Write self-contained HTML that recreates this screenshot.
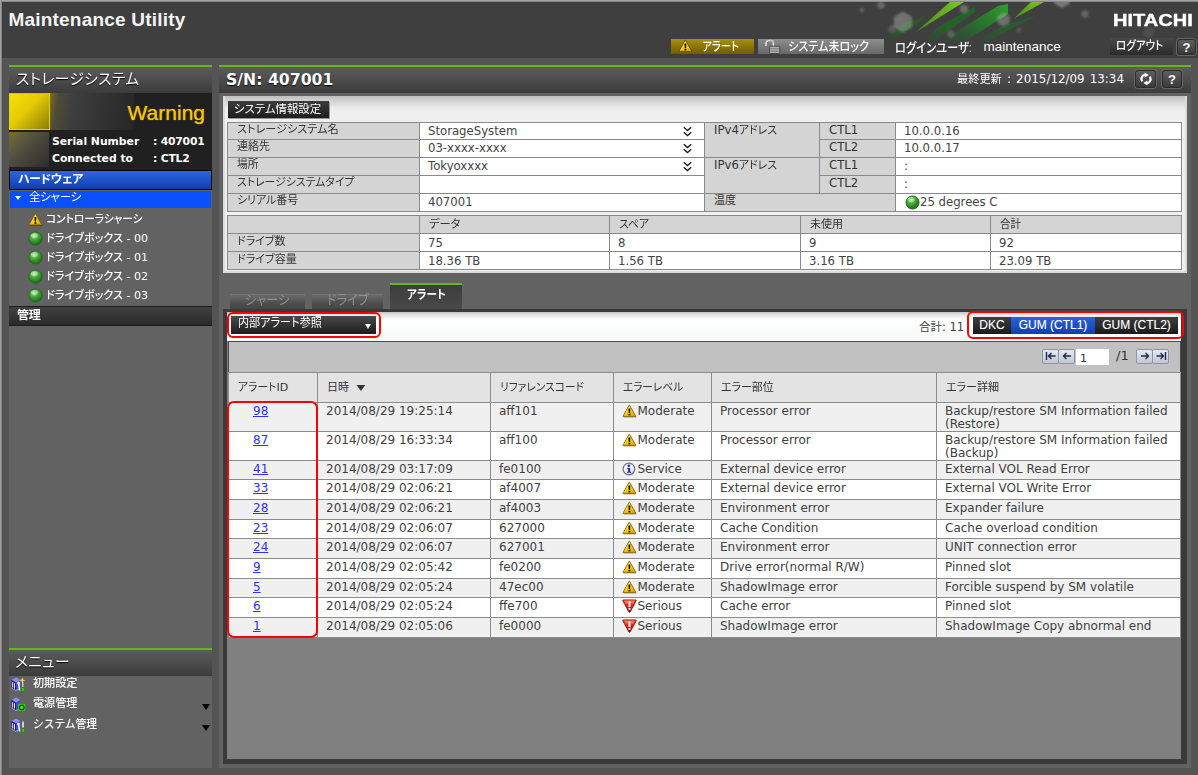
<!DOCTYPE html>
<html lang="ja"><head><meta charset="utf-8"><title>Maintenance Utility</title>
<style>
*{box-sizing:border-box;margin:0;padding:0}
html,body{width:1198px;height:775px;overflow:hidden}
body{position:relative;background:#545454;font-family:"DejaVu Sans","Liberation Sans","Noto Sans CJK JP",sans-serif;font-size:11.7px;color:#3c3c3c}
.abs{position:absolute}
.jp{font-family:"Liberation Sans","Noto Sans CJK JP",sans-serif}
#frameT{left:0;top:0;width:1198px;height:2px;background:linear-gradient(#b2b2b2,#7a7a7a)}
#frameL{left:0;top:0;width:2px;height:775px;background:linear-gradient(to right,#b2b2b2,#727272)}
#topbar{left:2px;top:2px;width:1196px;height:56px;background:#3f3f3f}
#title{left:8.5px;top:9px;font:bold 19px "Liberation Sans",sans-serif;color:#f4f4f4;letter-spacing:.2px;white-space:nowrap}
/* left panel */
#lp{left:9px;top:65px;width:203px;height:703px;background:#626262}
.gl{left:0;top:0;width:100%;height:2px;background:#5fb81c}
.phead{left:0;top:2px;width:100%;height:26px;background:linear-gradient(#5c5c5c,#3b3b3b);color:#fff}

.phead>span{position:absolute;left:7px;top:0px;font:15px "Liberation Sans","Noto Sans CJK JP",sans-serif;font-feature-settings:"palt";letter-spacing:.4px;color:#fff;white-space:nowrap;text-shadow:0 1px 1px #000}
#status{left:0;top:28px;width:100%;height:77px;background:#202020}
#sq1{left:0;top:0;width:41px;height:37px;background:linear-gradient(135deg,#f6e20a 0%,#e2cb06 45%,#8f7c05 100%);border:1px solid #e6cf06;border-top-color:#d8c208;border-left-color:#e8d408}
#sq2{left:0;top:39px;width:40px;height:35px;background:linear-gradient(135deg,#787033 0%,#525040 38%,#2c2c2c 100%)}
#sgrad{left:41px;top:0;width:84px;height:37px;background:linear-gradient(100deg,#7b6f1e 0%,#4e4c36 10%,#3e3e3e 28%,#262626 100%)}
#warn{right:7px;top:8px;font:21px "Liberation Sans",sans-serif;color:#f7c600;white-space:nowrap;text-shadow:0 0 1px rgba(247,198,0,.8)}
.sline{left:43px;font:bold 10.8px "DejaVu Sans","Liberation Sans",sans-serif;color:#fff;white-space:nowrap}
.sline b{position:absolute;left:101px;top:0;font-weight:bold;letter-spacing:-.2px}
#hw{left:0;top:105px;width:100%;height:20px;background:linear-gradient(#2d66e0,#0f3fae);border:1px solid #0a0a0a}
.bar>span{position:absolute;left:8px;top:-1.5px;font:bold 11.5px "Liberation Sans","Noto Sans CJK JP",sans-serif;font-feature-settings:"palt";letter-spacing:-.3px;color:#fff;white-space:nowrap}
#all{left:1px;top:126px;width:201px;height:17px;background:#0a50ff}
#all>span{position:absolute;left:19px;top:-3px;font:11.5px "Liberation Sans","Noto Sans CJK JP",sans-serif;font-feature-settings:"palt";letter-spacing:-.3px;color:#fff;white-space:nowrap}
#all i{position:absolute;left:5px;top:5px;border:3.5px solid transparent;border-top:4px solid #fff;border-bottom:0}
.ti{left:19px;height:18px;white-space:nowrap;font:500 11px "DejaVu Sans","Noto Sans CJK JP",sans-serif;font-feature-settings:"palt";color:#fff}
.ti>span{position:absolute;left:18px;top:-1px}
.ti svg{position:absolute;left:0;top:1px}
#mg{left:0;top:241px;width:100%;height:20px;background:linear-gradient(#404040,#2a2a2a);border:1px solid #1c1c1c;border-left:0;border-right:0}
#menu{left:0;top:583px;width:100%;height:119px}
#menu .phead>span{left:6px}
.mi{left:0;width:100%;height:18px;font:500 11.5px "Liberation Sans","Noto Sans CJK JP",sans-serif;color:#fff;white-space:nowrap}
.mi>span{position:absolute;left:24px;top:0}
.mi i{position:absolute;right:2.5px;top:10px;border:4px solid transparent;border-top:6px solid #000;border-bottom:0}
.mi svg{position:absolute;left:2px;top:3px}

/* top bar */
.tb{top:39px;height:15px;color:#fff;font:500 12px "Liberation Sans","Noto Sans CJK JP",sans-serif;font-feature-settings:"palt";white-space:nowrap}
.tb>span{position:absolute;top:-2px}
#b_alert{left:671px;width:83px;background:linear-gradient(#a8900f,#8c7608 50%,#6f5c02)}
#b_lock{left:758px;width:126px;background:linear-gradient(#8d8d8d,#7a7a7a 50%,#686868)}
#login{left:895px;top:37px;color:#fff;font:500 13px "Liberation Sans","Noto Sans CJK JP",sans-serif;font-feature-settings:"palt";white-space:nowrap}
#user{left:983.5px;top:39px;color:#fff;font:13.5px "Liberation Sans",sans-serif;white-space:nowrap}
#hitachi{left:1112.5px;top:10.5px;color:#fff;-webkit-text-stroke:.4px #fff;font:bold 16.5px "Liberation Sans",sans-serif;white-space:nowrap;transform:scaleX(1.215);transform-origin:0 0}
#logout{left:1110px;top:38px;width:63px;height:17px;background:linear-gradient(#484848,#2c2c2c);color:#fff;font:500 12px "Liberation Sans","Noto Sans CJK JP",sans-serif;font-feature-settings:"palt";white-space:nowrap}
#logout>span{position:absolute;left:6px;top:-2px}
.qb{width:19px;height:17px;border:1px solid #2c2c2c;border-radius:3px;box-shadow:0 0 0 1px #666;background:linear-gradient(#5e5e5e,#3a3a3a);color:#fff;font:bold 13px "Liberation Sans",sans-serif;text-align:center;line-height:16px}
/* right panel */
#rp{left:219px;top:65px;width:972px;height:703px;background:#626262}
#rp .phead span.sn{left:7px;top:2.5px;font:bold 15.7px "DejaVu Sans","Liberation Sans",sans-serif;letter-spacing:0}
#upd{right:67px;top:1.5px;color:#fff;word-spacing:1.3px;font:11.9px "DejaVu Sans","Noto Sans CJK JP",sans-serif;white-space:nowrap}
#info{left:4px;top:31px;width:964px;height:177px;background:linear-gradient(#bebebe,#d6d6d6 6px,#ebebeb 12px,#f0f0f0 17px);border:2px solid #dcdcdc;border-top:0}

#sysbtn{left:3px;top:5px;width:101px;height:17px;background:linear-gradient(#3c3c3c,#1e1e1e);color:#fff;font:11.5px "Liberation Sans","Noto Sans CJK JP",sans-serif;font-feature-settings:"palt";white-space:nowrap;box-shadow:1px 1px 0 #999}
#sysbtn>span{position:absolute;left:6px;top:-1px}
table{border-collapse:collapse;table-layout:fixed;position:absolute}
.it tr{height:18px}
.it td{border:1px solid #8a8a8a;padding:0 0 0 9px;vertical-align:top;line-height:16px;font-size:11.7px;color:#444;white-space:nowrap;overflow:hidden;background:#fff}
.it td.l{background:#d4d4d4;padding-left:9px;font:11px "DejaVu Sans","Noto Sans CJK JP",sans-serif;font-feature-settings:"palt";line-height:14px;color:#333}
.it td.v{padding-top:0;padding-left:8px}
.t2 td.v{padding-top:1px}
.it.t2 td.l{padding-top:2px}
.it td.m{font-size:11.7px;line-height:15px}
.it td.m .sx{font-size:11px}
.chev{position:absolute;right:12px;top:3px}
td{position:relative}

.tab{height:16px;background:linear-gradient(#6a6a6a,#4c4c4c 60%,#454545);color:#8e8e8e;text-align:left;font:13px "Liberation Sans","Noto Sans CJK JP",sans-serif;font-feature-settings:"palt";white-space:nowrap;text-align:center;border-top:1px solid #747474}
.tab>span{position:relative;top:-6px}
#tab3{left:171px;top:218px;width:72px;height:27px;background:linear-gradient(#3c3c3c,#4a4a4a);border-top:2px solid #5fb81c;color:#fff;text-align:left;font:bold 12px "Liberation Sans","Noto Sans CJK JP",sans-serif;font-feature-settings:"palt";text-align:center;white-space:nowrap}
#ac{left:4px;top:244px;width:964px;height:455px;background:#808080;border:solid #3a3a3a;border-width:2px 6px 5px 4px}
#tool{left:0;top:0;width:954px;height:30px;background:linear-gradient(#3a3a3a 0,#3a3a3a 1px,#c4c4c4 1px,#e6e6e6 4px,#fff 9px,#f7f9f9 100%)}
.red{border:2px solid #f00;border-radius:6px}
#dd{left:4px;top:5px;width:145px;height:18px;background:linear-gradient(#4a4a4a,#1c1c1c);color:#fff;font:12px "Liberation Sans","Noto Sans CJK JP",sans-serif;font-feature-settings:"palt";white-space:nowrap}
#dd>span{position:absolute;left:6.5px;top:-3px}
#dd i{position:absolute;right:5px;top:8px;border:3.5px solid transparent;border-top:5px solid #fff;border-bottom:0}
#total{left:692px;top:7px;font:11.5px "DejaVu Sans","Noto Sans CJK JP",sans-serif;color:#444;white-space:nowrap}
#seg{left:746px;top:6px;height:17px;color:#fff;font:12px "Liberation Sans",sans-serif;white-space:nowrap;background:linear-gradient(#3e3e3e,#1a1a1a)}
#seg>span{position:absolute;top:0;height:17px;line-height:17px;text-align:center;text-shadow:0 0 1px rgba(255,255,255,.35)}
#pager{left:1px;top:30px;width:953px;height:32px;background:#c1c1c1;border:1px solid #4a4a4a}
.pb{top:6.5px;width:17px;height:15px;border:1px solid #8d94a8;background:linear-gradient(#e6e8ee,#c3c7d2);border-radius:2px}
.pb svg{position:absolute;left:1.5px;top:1.5px}
#pin{left:847px;top:7px;width:33px;height:16px;background:#fff;font-size:11px;color:#333;padding:3px 0 0 4px}
#pof{left:887px;top:6px;font-size:13px;color:#333}

.at td{border:1px solid #8c8c8c;padding:2px 0 0 8px;vertical-align:top;font-size:12px;line-height:13px;color:#404040;background:#fff;overflow:hidden}
.at tr.o td{background:#f0f0f0}
.at tr.h td{background:#e3e3e3;height:30px;vertical-align:middle;padding:0 0 3px 9px;font:11px "DejaVu Sans","Noto Sans CJK JP",sans-serif;font-feature-settings:"palt";color:#333;white-space:nowrap}
.at td.id{padding-left:24px}
.at a{color:#3030f2;text-decoration:underline}
.at td.lv{padding-left:23.5px;white-space:nowrap}
.at td.lv svg{position:absolute;left:8px;top:1px}

.sx{display:inline-block;transform-origin:0 50%;white-space:nowrap}
</style></head><body><svg width="0" height="0" style="position:absolute"><defs><radialGradient id="ig" cx="40%" cy="30%" r="75%"><stop offset="0" stop-color="#fff"/><stop offset=".7" stop-color="#e8ecf4"/><stop offset="1" stop-color="#b9c2d2"/></radialGradient><linearGradient id="sg" x1="0" y1="0" x2="0" y2="1"><stop offset="0" stop-color="#ff4a30"/><stop offset=".6" stop-color="#d81c0e"/><stop offset="1" stop-color="#7e0a04"/></linearGradient><linearGradient id="wg" x1="0" y1="0" x2=".6" y2="1"><stop offset="0" stop-color="#fff27a"/><stop offset=".5" stop-color="#ffd92a"/><stop offset="1" stop-color="#e9a800"/></linearGradient></defs></svg>
<div class="abs" id="topbar"></div>
<div class="abs" id="frameT"></div><div class="abs" id="frameL"></div>
<div class="abs" id="title">Maintenance Utility</div>
<svg class="abs" id="deco" width="348" height="55" viewBox="850 2 348 55" style="left:850px;top:2px"><defs><linearGradient id="lg1" x1="0" y1="1" x2="1" y2="0"><stop offset="0" stop-color="#3d8a1a"/><stop offset="1" stop-color="#7cc61f"/></linearGradient><linearGradient id="lg2" x1="0" y1="1" x2="1" y2="0"><stop offset="0" stop-color="#1e5a22" stop-opacity="0"/><stop offset=".45" stop-color="#1f6a24" stop-opacity=".9"/><stop offset="1" stop-color="#1c6c24"/></linearGradient><linearGradient id="lg3" x1="0" y1="1" x2="1" y2="0"><stop offset="0" stop-color="#1e5a22" stop-opacity="0"/><stop offset=".5" stop-color="#22792a" stop-opacity=".8"/><stop offset="1" stop-color="#2fa02b"/></linearGradient><filter id="bl"><feGaussianBlur stdDeviation=".9"/></filter></defs><polygon points="927,16.5 906,22 878,43 888,43" fill="url(#lg2)" opacity=".6"/><polygon points="975,6.5 975,12 934,41 920,43 938,27" fill="url(#lg2)" opacity=".85"/><polygon points="1008,4 998,6 938,43 962,43 1008,14" fill="url(#lg3)"/><polygon points="1035,16 1000,27 972,44 984,44" fill="url(#lg2)" opacity=".7"/><polygon points="916,32 950,2 964,2" fill="url(#lg1)"/><polygon points="1014,18.5 1031,2 1044,2" fill="url(#lg1)"/><g filter="url(#bl)" fill="#fff"><polygon points="903.0,11.5 912.1,16.8 912.1,27.2 903.0,32.5 893.9,27.3 893.9,16.8" opacity="0.26"/><polygon points="881.0,1.0 884.5,3.0 884.5,7.0 881.0,9.0 877.5,7.0 877.5,3.0" opacity="0.22"/><polygon points="862.0,7.5 864.2,8.8 864.2,11.2 862.0,12.5 859.8,11.3 859.8,8.8" opacity="0.18"/><polygon points="892.0,24.8 895.6,26.9 895.6,31.1 892.0,33.2 888.4,31.1 888.4,26.9" opacity="0.14"/><polygon points="964.0,4.4 968.0,6.7 968.0,11.3 964.0,13.6 960.0,11.3 960.0,6.7" opacity="0.24"/><polygon points="1003.5,12.5 1009.6,16.0 1009.6,23.0 1003.5,26.5 997.4,23.0 997.4,16.0" opacity="0.24"/><polygon points="1062.0,-10.0 1069.8,-5.5 1069.8,3.5 1062.0,8.0 1054.2,3.5 1054.2,-5.5" opacity="0.3"/><polygon points="1085.0,10.0 1088.5,12.0 1088.5,16.0 1085.0,18.0 1081.5,16.0 1081.5,12.0" opacity="0.2"/><polygon points="951.0,29.8 954.6,31.9 954.6,36.1 951.0,38.2 947.4,36.1 947.4,31.9" opacity="0.16"/><polygon points="1019.0,27.4 1021.3,28.7 1021.3,31.3 1019.0,32.6 1016.7,31.3 1016.7,28.7" opacity="0.14"/><polygon points="1149.0,26.0 1154.2,29.0 1154.2,35.0 1149.0,38.0 1143.8,35.0 1143.8,29.0" opacity="0.08"/></g></svg>
<div class="abs tb" id="b_alert"><svg style="position:absolute;left:7px;top:0" width="15" height="14" viewBox="0 0 15 14"><path d="M7.3 .9 L13.9 12.4 H.9 Z" fill="url(#wg)" stroke="#5f4a08" stroke-width=".9" stroke-linejoin="round"/><path d="M6.4 4.4 h2 l-.35 4.6 h-1.3 Z" fill="#111"/><rect x="6.5" y="9.7" width="1.8" height="1.7" fill="#111"/></svg><span style="left:31px"><span class="sx" id="s14" style="transform:scaleX(0.868);margin-right:-5.6px">アラート</span></span></div>
<div class="abs tb" id="b_lock"><svg style="position:absolute;left:7px;top:0" width="16" height="15" viewBox="0 0 16 15"><path d="M1.2 7 V4.2 C1.2 .6 8.6 .6 8.6 4.2 V8" fill="none" stroke="#f2f2f2" stroke-width="1.7"/><path d="M1.2 7 V4.2 C1.2 .6 8.6 .6 8.6 4.2 V8" fill="none" stroke="#555" stroke-width=".5" transform="translate(.9 .3)"/><rect x="4.6" y="7.2" width="10.2" height="7.3" rx=".8" fill="#b9b9b9" stroke="#3d3d3d" stroke-width=".9"/><path d="M5.3 9.4 H14 M5.3 11 H14 M5.3 12.6 H14" stroke="#6e6e6e" stroke-width=".7"/></svg><span style="left:30px"><span class="sx" id="s15" style="transform:scaleX(0.925);margin-right:-6.6px">システム未ロック</span></span></div>
<div class="abs" id="login"><span class="sx" id="s16" style="transform:scaleX(0.867);margin-right:-11.8px">ログインユーザ:</span></div><div class="abs" id="user">maintenance</div>
<div class="abs" id="hitachi">HITACHI</div>
<div class="abs" id="logout"><span><span class="sx" id="s17" style="transform:scaleX(0.879);margin-right:-6.5px">ログアウト</span></span></div>
<div class="abs qb" style="left:1177px;top:38.5px;height:16px;line-height:15px">?</div>
<div class="abs" id="rp"><div class="abs gl"></div><div class="abs phead"><span class="sn">S/N: 407001</span>
<div class="abs" id="upd"><span class="sx" id="s42" style="transform:scaleX(0.942);margin-right:-2.8px">最終更新</span> : 2015/12/09 13:34</div>
<div class="abs qb" style="left:916px;top:2.5px;height:18px;width:21px"><svg style="position:absolute;left:2.5px;top:1.5px" width="14" height="14" viewBox="0 0 13 13"><path d="M3.2 8.6 A3.6 3.6 0 0 1 6.2 2.6" fill="none" stroke="#fff" stroke-width="2"/><path d="M5.2 .4 L9 2.9 L5.2 5.3 Z" fill="#fff"/><path d="M9.8 4.4 A3.6 3.6 0 0 1 6.8 10.4" fill="none" stroke="#fff" stroke-width="2"/><path d="M7.8 12.6 L4 10.1 L7.8 7.7 Z" fill="#fff"/></svg></div><div class="abs qb" style="left:943px;top:2.5px;height:18px;width:20px;line-height:17px">?</div></div>
<div class="abs tab" style="left:11px;top:229px;width:75px"><span><span class="sx" id="s33" style="transform:scaleX(0.944);margin-right:-2.6px">シャーシ</span></span></div>
<div class="abs tab" style="left:93px;top:229px;width:71px"><span><span class="sx" id="s34" style="transform:scaleX(0.937);margin-right:-2.8px">ドライブ</span></span></div>
<div class="abs" id="tab3"><span><span class="sx" id="s35" style="transform:scaleX(0.886);margin-right:-5.0px">アラート</span></span></div>
<div class="abs" id="ac"><div class="abs" id="tool">
<div class="abs" id="dd"><span><span class="sx" id="s36" style="transform:scaleX(0.926);margin-right:-6.7px">内部アラート参照</span></span><i></i></div>
<div class="abs red" style="left:0px;top:1px;width:154px;height:26px"></div>
<div class="abs" id="total">合計: 11</div>
<div class="abs" id="seg" style="width:205px"><span style="left:0;width:38px">DKC</span><span style="left:38px;width:84px;background:linear-gradient(#2a62dc,#0f3fae)">GUM (CTL1)</span><span style="left:122px;width:83px">GUM (CTL2)</span></div>
<div class="abs red" style="left:740px;top:0px;width:217px;height:28px"></div>
</div>
<div class="abs" id="pager"><div class="abs pb" style="left:813px"><svg width="12" height="10" viewBox="0 0 12 10"><path d="M1.5 1 V9 M10.5 5 H3.5 M6.5 2 L3.5 5 L6.5 8" fill="none" stroke="#1a2a55" stroke-width="1.4"/></svg></div><div class="abs pb" style="left:829px"><svg width="12" height="10" viewBox="0 0 12 10"><path d="M10 5 H2.5 M5.5 2 L2.5 5 L5.5 8" fill="none" stroke="#1a2a55" stroke-width="1.4"/></svg></div><div class="abs" id="pin">1</div><div class="abs" id="pof">/1</div><div class="abs pb" style="left:907px"><svg width="12" height="10" viewBox="0 0 12 10"><path d="M2 5 H9.5 M6.5 2 L9.5 5 L6.5 8" fill="none" stroke="#1a2a55" stroke-width="1.4"/></svg></div><div class="abs pb" style="left:923px"><svg width="12" height="10" viewBox="0 0 12 10"><path d="M10.5 1 V9 M1.5 5 H8.5 M5.5 2 L8.5 5 L5.5 8" fill="none" stroke="#1a2a55" stroke-width="1.4"/></svg></div></div>
<table class="at" style="left:1px;top:61px;width:952px"><colgroup><col style="width:89px"><col style="width:173px"><col style="width:123px"><col style="width:98px"><col style="width:225px"><col style="width:244px"></colgroup><tr class="h"><td><span class="sx" id="s37" style="transform:scaleX(0.986);margin-right:-0.6px">アラート</span>ID</td><td>日時<span style="display:inline-block;font-size:10px;margin-left:8px;transform:scale(1.15,.8)">▼</span></td><td><span class="sx" id="s38" style="transform:scaleX(0.973);margin-right:-2.3px">リファレンスコード</span></td><td><span class="sx" id="s39" style="transform:scaleX(0.968);margin-right:-2.0px">エラーレベル</span></td><td><span class="sx" id="s40" style="transform:scaleX(0.998);margin-right:-0.1px">エラー部位</span></td><td><span class="sx" id="s41" style="transform:scaleX(1.005);margin-right:0.3px">エラー詳細</span></td></tr><tr class="o" style="height:29px"><td class="id"><a>98</a></td><td>2014/08/29 19:25:14</td><td>aff101</td><td class="lv"><svg class="wi" width="15" height="14" viewBox="0 0 15 14"><path d="M7.3 .9 L13.9 12.6 H.9 Z" fill="#6b5200" opacity=".55" transform="translate(.5 .8)"/><path d="M7.3 .9 L13.9 12.4 H.9 Z" fill="url(#wg)" stroke="#8a6a10" stroke-width=".9" stroke-linejoin="round"/><path d="M6.4 4.4 h2 l-.35 4.6 h-1.3 Z" fill="#111"/><rect x="6.5" y="9.7" width="1.8" height="1.7" fill="#111"/></svg>Moderate</td><td>Processor error</td><td>Backup/restore SM Information failed (Restore)</td></tr><tr style="height:29px"><td class="id"><a>87</a></td><td>2014/08/29 16:33:34</td><td>aff100</td><td class="lv"><svg class="wi" width="15" height="14" viewBox="0 0 15 14"><path d="M7.3 .9 L13.9 12.6 H.9 Z" fill="#6b5200" opacity=".55" transform="translate(.5 .8)"/><path d="M7.3 .9 L13.9 12.4 H.9 Z" fill="url(#wg)" stroke="#8a6a10" stroke-width=".9" stroke-linejoin="round"/><path d="M6.4 4.4 h2 l-.35 4.6 h-1.3 Z" fill="#111"/><rect x="6.5" y="9.7" width="1.8" height="1.7" fill="#111"/></svg>Moderate</td><td>Processor error</td><td>Backup/restore SM Information failed (Backup)</td></tr><tr class="o" style="height:19px"><td class="id"><a>41</a></td><td>2014/08/29 03:17:09</td><td>fe0100</td><td class="lv"><svg width="14" height="14" viewBox="0 0 15 15"><circle cx="7.8" cy="8" r="6.4" fill="#555" opacity=".5"/><circle cx="7.4" cy="7.4" r="6.2" fill="url(#ig)" stroke="#70757f" stroke-width="1.2"/><path d="M5.7 6.3 h3 v4.2 h1 v1.1 h-4.2 v-1.1 h1.1 v-3.1 h-.9 Z" fill="#1a1fd0"/><circle cx="7.4" cy="3.9" r="1.35" fill="#1a1fd0"/></svg>Service</td><td>External device error</td><td>External VOL Read Error</td></tr><tr style="height:20px"><td class="id"><a>33</a></td><td>2014/08/29 02:06:21</td><td>af4007</td><td class="lv"><svg class="wi" width="15" height="14" viewBox="0 0 15 14"><path d="M7.3 .9 L13.9 12.6 H.9 Z" fill="#6b5200" opacity=".55" transform="translate(.5 .8)"/><path d="M7.3 .9 L13.9 12.4 H.9 Z" fill="url(#wg)" stroke="#8a6a10" stroke-width=".9" stroke-linejoin="round"/><path d="M6.4 4.4 h2 l-.35 4.6 h-1.3 Z" fill="#111"/><rect x="6.5" y="9.7" width="1.8" height="1.7" fill="#111"/></svg>Moderate</td><td>External device error</td><td>External VOL Write Error</td></tr><tr class="o" style="height:20px"><td class="id"><a>28</a></td><td>2014/08/29 02:06:21</td><td>af4003</td><td class="lv"><svg class="wi" width="15" height="14" viewBox="0 0 15 14"><path d="M7.3 .9 L13.9 12.6 H.9 Z" fill="#6b5200" opacity=".55" transform="translate(.5 .8)"/><path d="M7.3 .9 L13.9 12.4 H.9 Z" fill="url(#wg)" stroke="#8a6a10" stroke-width=".9" stroke-linejoin="round"/><path d="M6.4 4.4 h2 l-.35 4.6 h-1.3 Z" fill="#111"/><rect x="6.5" y="9.7" width="1.8" height="1.7" fill="#111"/></svg>Moderate</td><td>Environment error</td><td>Expander failure</td></tr><tr style="height:19px"><td class="id"><a>23</a></td><td>2014/08/29 02:06:07</td><td>627000</td><td class="lv"><svg class="wi" width="15" height="14" viewBox="0 0 15 14"><path d="M7.3 .9 L13.9 12.6 H.9 Z" fill="#6b5200" opacity=".55" transform="translate(.5 .8)"/><path d="M7.3 .9 L13.9 12.4 H.9 Z" fill="url(#wg)" stroke="#8a6a10" stroke-width=".9" stroke-linejoin="round"/><path d="M6.4 4.4 h2 l-.35 4.6 h-1.3 Z" fill="#111"/><rect x="6.5" y="9.7" width="1.8" height="1.7" fill="#111"/></svg>Moderate</td><td>Cache Condition</td><td>Cache overload condition</td></tr><tr class="o" style="height:20px"><td class="id"><a>24</a></td><td>2014/08/29 02:06:07</td><td>627001</td><td class="lv"><svg class="wi" width="15" height="14" viewBox="0 0 15 14"><path d="M7.3 .9 L13.9 12.6 H.9 Z" fill="#6b5200" opacity=".55" transform="translate(.5 .8)"/><path d="M7.3 .9 L13.9 12.4 H.9 Z" fill="url(#wg)" stroke="#8a6a10" stroke-width=".9" stroke-linejoin="round"/><path d="M6.4 4.4 h2 l-.35 4.6 h-1.3 Z" fill="#111"/><rect x="6.5" y="9.7" width="1.8" height="1.7" fill="#111"/></svg>Moderate</td><td>Environment error</td><td>UNIT connection error</td></tr><tr style="height:20px"><td class="id"><a>9</a></td><td>2014/08/29 02:05:42</td><td>fe0200</td><td class="lv"><svg class="wi" width="15" height="14" viewBox="0 0 15 14"><path d="M7.3 .9 L13.9 12.6 H.9 Z" fill="#6b5200" opacity=".55" transform="translate(.5 .8)"/><path d="M7.3 .9 L13.9 12.4 H.9 Z" fill="url(#wg)" stroke="#8a6a10" stroke-width=".9" stroke-linejoin="round"/><path d="M6.4 4.4 h2 l-.35 4.6 h-1.3 Z" fill="#111"/><rect x="6.5" y="9.7" width="1.8" height="1.7" fill="#111"/></svg>Moderate</td><td>Drive error(normal R/W)</td><td>Pinned slot</td></tr><tr class="o" style="height:19px"><td class="id"><a>5</a></td><td>2014/08/29 02:05:24</td><td>47ec00</td><td class="lv"><svg class="wi" width="15" height="14" viewBox="0 0 15 14"><path d="M7.3 .9 L13.9 12.6 H.9 Z" fill="#6b5200" opacity=".55" transform="translate(.5 .8)"/><path d="M7.3 .9 L13.9 12.4 H.9 Z" fill="url(#wg)" stroke="#8a6a10" stroke-width=".9" stroke-linejoin="round"/><path d="M6.4 4.4 h2 l-.35 4.6 h-1.3 Z" fill="#111"/><rect x="6.5" y="9.7" width="1.8" height="1.7" fill="#111"/></svg>Moderate</td><td>ShadowImage error</td><td>Forcible suspend by SM volatile</td></tr><tr style="height:20px"><td class="id"><a>6</a></td><td>2014/08/29 02:05:24</td><td>ffe700</td><td class="lv"><svg width="15" height="14" viewBox="0 0 15 14"><path d="M1.4 .9 H13.6 Q14.7 .9 14.1 1.9 L8.3 12.7 Q7.5 13.8 6.7 12.7 L.9 1.9 Q.3 .9 1.4 .9 Z" fill="url(#sg)" stroke="#7a0f06" stroke-width=".8"/><path d="M2 1.6 H13 L11 5 Q7.5 3 4 5 Z" fill="#ff9a80" opacity=".55"/><rect x="6.5" y="2.4" width="2" height="5.6" fill="#fff"/><rect x="6.5" y="8.9" width="2" height="1.9" fill="#fff"/></svg>Serious</td><td>Cache error</td><td>Pinned slot</td></tr><tr class="o" style="height:20px"><td class="id"><a>1</a></td><td>2014/08/29 02:05:06</td><td>fe0000</td><td class="lv"><svg width="15" height="14" viewBox="0 0 15 14"><path d="M1.4 .9 H13.6 Q14.7 .9 14.1 1.9 L8.3 12.7 Q7.5 13.8 6.7 12.7 L.9 1.9 Q.3 .9 1.4 .9 Z" fill="url(#sg)" stroke="#7a0f06" stroke-width=".8"/><path d="M2 1.6 H13 L11 5 Q7.5 3 4 5 Z" fill="#ff9a80" opacity=".55"/><rect x="6.5" y="2.4" width="2" height="5.6" fill="#fff"/><rect x="6.5" y="8.9" width="2" height="1.9" fill="#fff"/></svg>Serious</td><td>ShadowImage error</td><td>ShadowImage Copy abnormal end</td></tr></table><div class="abs red" style="left:0px;top:90px;width:91px;height:237px;border-radius:7px"></div></div>
<div class="abs" id="info">
<div class="abs" id="sysbtn"><span><span class="sx" id="s18" style="transform:scaleX(0.992);margin-right:-0.7px">システム情報設定</span></span></div>
<table class="it" style="left:2px;top:26px;width:477px"><colgroup><col style="width:192px"><col style="width:285px"></colgroup>
<tr style="height:17px"><td class="l"><span class="sx" id="s19" style="transform:scaleX(1.012);margin-right:1.2px">ストレージシステム名</span></td><td class="v">StorageSystem<svg class="chev" width="9" height="12" viewBox="0 0 9 12"><path d="M.8 1.2 L4.5 4.6 L8.2 1.2 M.8 6.2 L4.5 9.6 L8.2 6.2" fill="none" stroke="#1c1c1c" stroke-width="1.3"/></svg></td></tr>
<tr><td class="l"><span class="sx" id="s20" style="transform:scaleX(1.003);margin-right:0.1px">連絡先</span></td><td class="v">03-xxxx-xxxx<svg class="chev" width="9" height="12" viewBox="0 0 9 12"><path d="M.8 1.2 L4.5 4.6 L8.2 1.2 M.8 6.2 L4.5 9.6 L8.2 6.2" fill="none" stroke="#1c1c1c" stroke-width="1.3"/></svg></td></tr>
<tr><td class="l"><span class="sx" id="s21" style="transform:scaleX(0.973);margin-right:-0.6px">場所</span></td><td class="v">Tokyoxxxx<svg class="chev" width="9" height="12" viewBox="0 0 9 12"><path d="M.8 1.2 L4.5 4.6 L8.2 1.2 M.8 6.2 L4.5 9.6 L8.2 6.2" fill="none" stroke="#1c1c1c" stroke-width="1.3"/></svg></td></tr>
<tr><td class="l"><span class="sx" id="s22" style="transform:scaleX(0.987);margin-right:-1.6px">ストレージシステムタイプ</span></td><td class="v"></td></tr>
<tr><td class="l"><span class="sx" id="s23" style="transform:scaleX(0.993);margin-right:-0.4px">シリアル番号</span></td><td class="v">407001</td></tr></table>
<table class="it" style="left:479px;top:26px;width:477px"><colgroup><col style="width:115px"><col style="width:76px"><col style="width:286px"></colgroup>
<tr style="height:17px"><td class="l m" rowspan="2">IPv4<span class="sx" id="s24" style="transform:scaleX(0.986);margin-right:-0.5px">アドレス</span></td><td class="l m">CTL1</td><td class="v">10.0.0.16</td></tr>
<tr><td class="l m">CTL2</td><td class="v">10.0.0.17</td></tr>
<tr><td class="l m" rowspan="2">IPv6<span class="sx" id="s25" style="transform:scaleX(0.986);margin-right:-0.5px">アドレス</span></td><td class="l m">CTL1</td><td class="v">:</td></tr>
<tr><td class="l m">CTL2</td><td class="v">:</td></tr>
<tr><td class="l" colspan="2"><span class="sx" id="s26" style="transform:scaleX(1.000);margin-right:0.0px">温度</span></td><td class="v" style="padding-left:24px"><svg width="15" height="15" viewBox="0 0 15 15" style="position:absolute;left:9px;top:1px"><circle cx="7.5" cy="7.5" r="6.6" fill="url(#gg)" stroke="#1d6a18" stroke-width=".8"/><ellipse cx="6.3" cy="4.6" rx="3.6" ry="2.3" fill="#fff" opacity=".35"/></svg>25 degrees C</td></tr></table>
<table class="it t2" style="left:2px;top:119px;width:954px"><colgroup><col style="width:192px"><col style="width:190px"><col style="width:191px"><col style="width:190px"><col style="width:191px"></colgroup>
<tr><td class="l"></td><td class="l"><span class="sx" id="s27" style="transform:scaleX(1.018);margin-right:0.6px">データ</span></td><td class="l"><span class="sx" id="s28" style="transform:scaleX(0.982);margin-right:-0.6px">スペア</span></td><td class="l"><span class="sx" id="s29" style="transform:scaleX(1.003);margin-right:0.1px">未使用</span></td><td class="l"><span class="sx" id="s30" style="transform:scaleX(0.950);margin-right:-1.1px">合計</span></td></tr>
<tr><td class="l" style="padding-top:.5px"><span class="sx" id="s31" style="transform:scaleX(0.997);margin-right:-0.2px">ドライブ数</span></td><td class="v">75</td><td class="v">8</td><td class="v">9</td><td class="v">92</td></tr>
<tr><td class="l" style="padding-top:.5px"><span class="sx" id="s32" style="transform:scaleX(1.002);margin-right:0.1px">ドライブ容量</span></td><td class="v">18.36 TB</td><td class="v">1.56 TB</td><td class="v">3.16 TB</td><td class="v">23.09 TB</td></tr></table>
</div>
</div>
<div class="abs" id="lp"><div class="abs gl"></div><div class="abs phead"><span><span class="sx" id="s1" style="transform:scaleX(0.982);margin-right:-2.2px">ストレージシステム</span></span></div>
<div class="abs" id="status"><div class="abs" id="sgrad"></div><div class="abs" id="sq1"></div><div class="abs" id="sq2"></div>
<div class="abs" id="warn">Warning</div>
<div class="abs sline" style="top:42px">Serial Number<b>: 407001</b></div>
<div class="abs sline" style="top:59px">Connected to<b>: CTL2</b></div></div>
<div class="abs bar" id="hw"><span><span class="sx" id="s2" style="transform:scaleX(1.043);margin-right:2.7px">ハードウェア</span></span></div>
<div class="abs" id="all"><i></i><span><span class="sx" id="s3" style="transform:scaleX(1.004);margin-right:0.2px">全シャーシ</span></span></div>
<div class="abs ti" style="top:146px"><svg width="15" height="15" viewBox="0 0 15 14"><path d="M7.3 .9 L13.9 12.6 H.9 Z" fill="#3a2c00" opacity=".6" transform="translate(.4 .8)"/><path d="M7.3 .9 L13.9 12.4 H.9 Z" fill="url(#wg)" stroke="#7a5e10" stroke-width=".9" stroke-linejoin="round"/><path d="M6.4 4.4 h2 l-.35 4.6 h-1.3 Z" fill="#111"/><rect x="6.5" y="9.7" width="1.8" height="1.7" fill="#111"/></svg><span><span class="sx" id="s4" style="transform:scaleX(0.971);margin-right:-2.9px">コントローラシャーシ</span></span></div>
<div class="abs ti" style="top:165px"><svg width="15" height="15" viewBox="0 0 15 15"><defs><radialGradient id="gg" cx="40%" cy="30%" r="70%"><stop offset="0" stop-color="#b4e4a4"/><stop offset=".4" stop-color="#49ae3a"/><stop offset="1" stop-color="#1a6a15"/></radialGradient></defs><circle cx="7.5" cy="7.5" r="6.6" fill="url(#gg)" stroke="#1d6a18" stroke-width=".8"/><ellipse cx="6.3" cy="4.6" rx="3.6" ry="2.3" fill="#fff" opacity=".35"/></svg><span><span class="sx" id="s5" style="transform:scaleX(1.010);margin-right:0.7px">ドライブボックス</span> - 00</span></div>
<div class="abs ti" style="top:184px"><svg width="15" height="15" viewBox="0 0 15 15"><defs><radialGradient id="gg" cx="40%" cy="30%" r="70%"><stop offset="0" stop-color="#b4e4a4"/><stop offset=".4" stop-color="#49ae3a"/><stop offset="1" stop-color="#1a6a15"/></radialGradient></defs><circle cx="7.5" cy="7.5" r="6.6" fill="url(#gg)" stroke="#1d6a18" stroke-width=".8"/><ellipse cx="6.3" cy="4.6" rx="3.6" ry="2.3" fill="#fff" opacity=".35"/></svg><span><span class="sx" id="s6" style="transform:scaleX(1.010);margin-right:0.7px">ドライブボックス</span> - 01</span></div>
<div class="abs ti" style="top:203px"><svg width="15" height="15" viewBox="0 0 15 15"><defs><radialGradient id="gg" cx="40%" cy="30%" r="70%"><stop offset="0" stop-color="#b4e4a4"/><stop offset=".4" stop-color="#49ae3a"/><stop offset="1" stop-color="#1a6a15"/></radialGradient></defs><circle cx="7.5" cy="7.5" r="6.6" fill="url(#gg)" stroke="#1d6a18" stroke-width=".8"/><ellipse cx="6.3" cy="4.6" rx="3.6" ry="2.3" fill="#fff" opacity=".35"/></svg><span><span class="sx" id="s7" style="transform:scaleX(1.010);margin-right:0.7px">ドライブボックス</span> - 02</span></div>
<div class="abs ti" style="top:222px"><svg width="15" height="15" viewBox="0 0 15 15"><defs><radialGradient id="gg" cx="40%" cy="30%" r="70%"><stop offset="0" stop-color="#b4e4a4"/><stop offset=".4" stop-color="#49ae3a"/><stop offset="1" stop-color="#1a6a15"/></radialGradient></defs><circle cx="7.5" cy="7.5" r="6.6" fill="url(#gg)" stroke="#1d6a18" stroke-width=".8"/><ellipse cx="6.3" cy="4.6" rx="3.6" ry="2.3" fill="#fff" opacity=".35"/></svg><span><span class="sx" id="s8" style="transform:scaleX(1.010);margin-right:0.7px">ドライブボックス</span> - 03</span></div>
<div class="abs bar" id="mg"><span><span class="sx" id="s9" style="transform:scaleX(1.044);margin-right:1.0px">管理</span></span></div>
<div class="abs" id="menu"><div class="abs gl"></div><div class="abs phead"><span><span class="sx" id="s10" style="transform:scaleX(0.982);margin-right:-1.0px">メニュー</span></span></div>
<div class="abs mi" style="top:26px"><svg width="15" height="15" viewBox="0 0 15 15"><polygon points=".5,3 5,.5 9.5,3 5,5.5" fill="#8c8cf2"/><polygon points=".5,3 5,5.5 5,13.5 .5,11" fill="#1b1b96"/><polygon points="5,5.5 9.5,3 9.5,11 5,13.5" fill="#4848cf"/><path d="M1.7 5.2 V10.6 M3.5 6.2 V11.6" stroke="#fff" stroke-width=".9"/><path d="M.5 11 L5 13.5 L9.5 11" stroke="#ddd" stroke-width=".6" fill="none"/><path d="M7.6 6.2 L8.6 13.5" stroke="#f4f4f4" stroke-width="1.6"/><circle cx="7.5" cy="6" r="1.5" fill="#e8e8e8"/><path d="M11.3 .3 L12.1 2.6 L14.5 3.3 L12.1 4 L11.3 6.6 L10.5 4 L8.2 3.3 L10.5 2.6 Z" fill="#ffd83a"/><path d="M11.8 5 V10" stroke="#f4f4f4" stroke-width="1"/><rect x="10.6" y="10.6" width="3" height="3.6" fill="#38c41c" stroke="#1d7a10" stroke-width=".5"/></svg><span><span class="sx" id="s11" style="transform:scaleX(0.967);margin-right:-1.5px">初期設定</span></span></div>
<div class="abs mi" style="top:46px"><svg width="15" height="15" viewBox="0 0 15 15"><polygon points=".5,3 5,.5 9.5,3 5,5.5" fill="#8c8cf2"/><polygon points=".5,3 5,5.5 5,13.5 .5,11" fill="#1b1b96"/><polygon points="5,5.5 9.5,3 9.5,11 5,13.5" fill="#4848cf"/><path d="M1.7 5.2 V10.6 M3.5 6.2 V11.6" stroke="#fff" stroke-width=".9"/><path d="M.5 11 L5 13.5 L9.5 11" stroke="#ddd" stroke-width=".6" fill="none"/><rect x="7" y="6.5" width="7.6" height="7.8" rx="1.4" fill="#3fd61f" stroke="#1f8a12" stroke-width=".6"/><circle cx="10.8" cy="10.4" r="2.3" fill="#4ee02a" stroke="#14420c" stroke-width="1.1"/></svg><span><span class="sx" id="s12" style="transform:scaleX(0.967);margin-right:-1.5px">電源管理</span></span><i></i></div>
<div class="abs mi" style="top:67px"><svg width="15" height="15" viewBox="0 0 15 15"><polygon points=".5,3 5,.5 9.5,3 5,5.5" fill="#8c8cf2"/><polygon points=".5,3 5,5.5 5,13.5 .5,11" fill="#1b1b96"/><polygon points="5,5.5 9.5,3 9.5,11 5,13.5" fill="#4848cf"/><path d="M1.7 5.2 V10.6 M3.5 6.2 V11.6" stroke="#fff" stroke-width=".9"/><path d="M.5 11 L5 13.5 L9.5 11" stroke="#ddd" stroke-width=".6" fill="none"/><path d="M7.6 6.2 L8.6 13.5" stroke="#f4f4f4" stroke-width="1.6"/><circle cx="7.5" cy="6" r="1.5" fill="#e8e8e8"/><path d="M12 3.5 V9.6" stroke="#f4f4f4" stroke-width="1.5"/><rect x="10.6" y="10.6" width="3" height="3.6" fill="#38c41c" stroke="#1d7a10" stroke-width=".5"/></svg><span><span class="sx" id="s13" style="transform:scaleX(0.932);margin-right:-4.7px">システム管理</span></span><i></i></div>
</div>
</div>
</body></html>
